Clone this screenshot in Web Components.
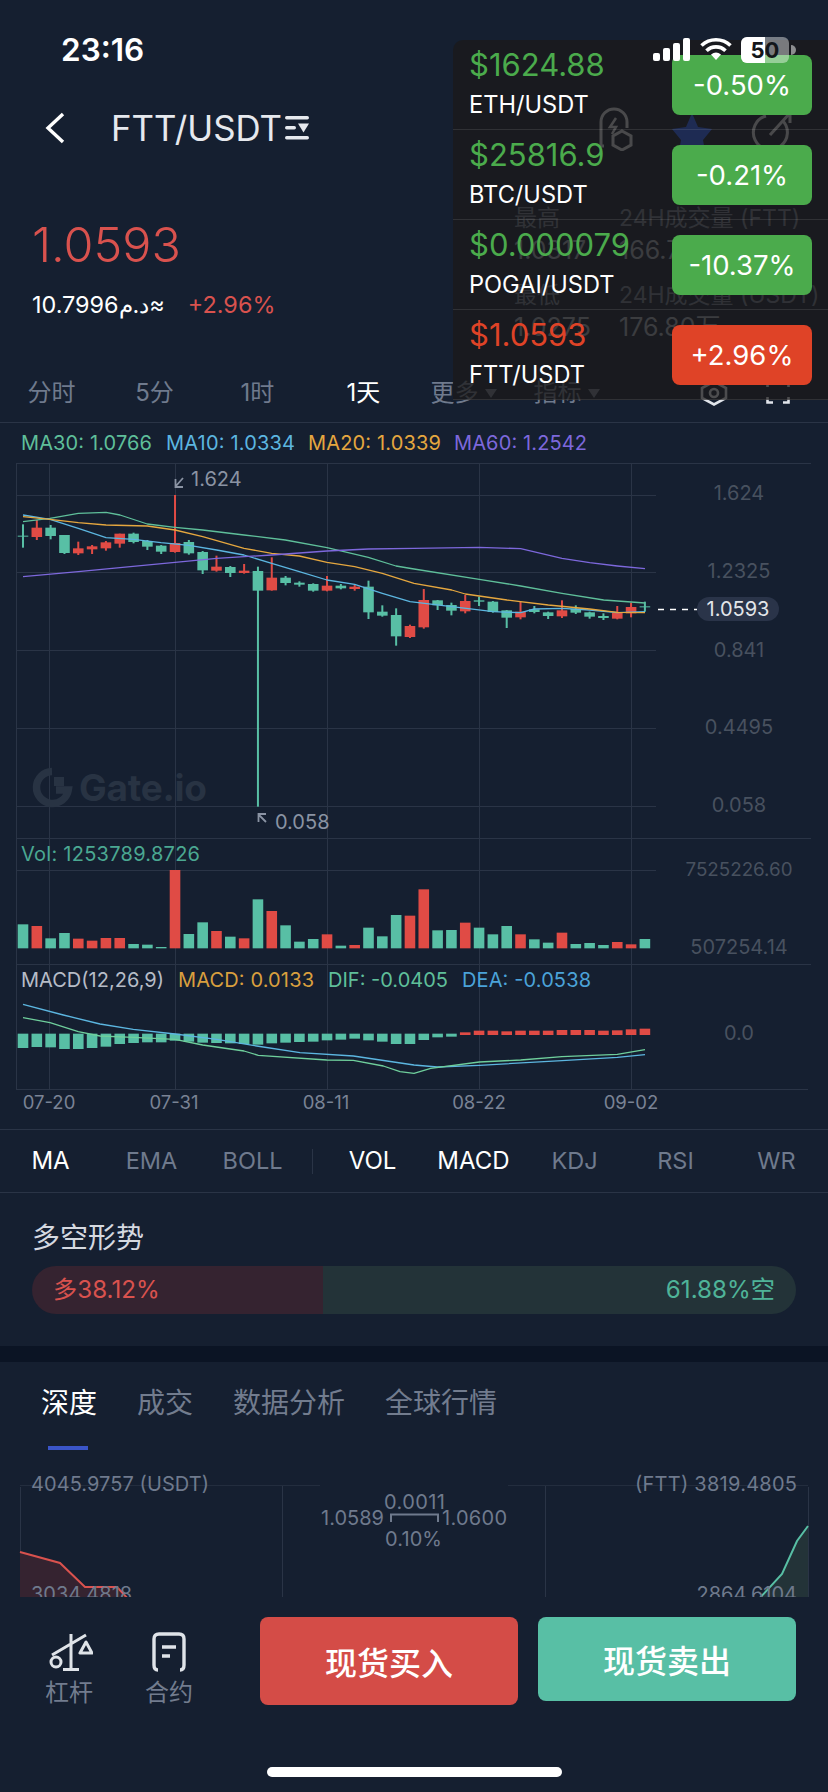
<!DOCTYPE html>
<html lang="zh">
<head>
<meta charset="UTF-8">
<title>FTT/USDT</title>
<style>
  html, body { margin: 0; padding: 0; background: #151f30; }
  body { position: relative; width: 828px; height: 1792px; overflow: hidden; font-family: Inter, "Noto Sans CJK SC", sans-serif; color: #fff; }
</style>
</head>
<body>
  <status-bar></status-bar>
  <pair-header>FTT/USDT</pair-header>
  <price-summary></price-summary>
  <period-tabs></period-tabs>
  <kline-chart></kline-chart>
  <indicator-tabs></indicator-tabs>
  <long-short></long-short>
  <detail-tabs></detail-tabs>
  <depth-chart></depth-chart>
  <bottom-bar></bottom-bar>
  <price-popup></price-popup>

<script>
  const FONT = 'Inter, "Noto Sans CJK SC", sans-serif';

  class StatusBar extends HTMLElement {
    connectedCallback() {
      this.attachShadow({ mode: 'open' }).innerHTML = `
        <style>
          :host { display: flex; position: relative; z-index: 3; height: 80px; box-sizing: border-box; padding: 33px 30px 0 61px; justify-content: space-between; }
          .time { font: 600 31.5px/34px ${FONT}; }
          svg { display: block; margin-top: 1px; }
          text { font: 700 22px ${FONT}; }
        </style>
        <div class="time">23:16</div>
        <svg width="148" height="32" viewBox="650 34 148 32">
          <g fill="#fff">
            <rect x="653" y="53" width="7" height="8" rx="2"/>
            <rect x="663" y="48" width="7" height="13" rx="2"/>
            <rect x="673" y="43" width="7" height="18" rx="2"/>
            <rect x="683" y="38" width="7" height="23" rx="2"/>
            <path d="M711 54.5 L716 60 L721 54.5 A8 8 0 0 0 711 54.5Z"/>
          </g>
          <g fill="none" stroke="#fff" stroke-width="3.6">
            <path d="M701.5 45.5 A21 21 0 0 1 730.5 45.5"/>
            <path d="M706.5 50.8 A13.5 13.5 0 0 1 725.5 50.8"/>
          </g>
          <rect x="741" y="37" width="48" height="26" rx="6" fill="#fff" fill-opacity=".42"/>
          <path d="M747 37 H765 V63 H747 A6 6 0 0 1 741 57 V43 A6 6 0 0 1 747 37Z" fill="#fff"/>
          <path d="M791 45 A5 5 0 0 1 791 55Z" fill="#fff" fill-opacity=".5"/>
          <text x="765" y="58" text-anchor="middle" fill="#14161a">50</text>
        </svg>`;
    }
  }
  customElements.define('status-bar', StatusBar);

  class PairHeader extends HTMLElement {
    connectedCallback() {
      this.attachShadow({ mode: 'open' }).innerHTML = `
        <style>
          :host { display: flex; align-items: center; height: 96px; box-sizing: border-box; padding-left: 45px; color: #e6e9ee; }
          .title { font: 400 34.8px/40px ${FONT}; margin-left: 46px; }
          .mark { margin-left: 3px; }
          .right { display: flex; align-items: center; margin-left: auto; }
          svg { display: block; }
        </style>
        <svg width="20" height="32" viewBox="0 0 20 32"><path d="M18 2 L3 16 L18 30" fill="none" stroke="#fff" stroke-width="3.4"/></svg>
        <div class="title"><slot></slot></div>
        <svg class="mark" width="24" height="24" viewBox="0 0 24 24" fill="#e6e9ee">
          <rect y="0" width="24" height="3.5" rx="1.7"/><rect y="20" width="24" height="3.5" rx="1.7"/>
          <rect y="10" width="11" height="3.5" rx="1.7"/><path d="M13 7.5 H24 L18.5 16.5Z"/>
        </svg>
        <div class="right">
          <svg width="231" height="46" viewBox="597 105 231 46" fill="none" stroke="#d4d8df" stroke-width="3">
            <path d="M604 146 H601 V122 A13 13 0 0 1 614 109 A13 13 0 0 1 627 122 V128"/>
            <path d="M616 118 L610 127 H616 L612 134" stroke-width="2.5"/>
            <path d="M622 131 L631 136 V145 L622 150 L613 145 V136Z"/>
            <path d="M692 113 L698 127 L712 129 L703 140 L705 151 H679 L681 140 L672 129 L686 127Z" fill="#2a60ff" stroke="none"/>
            <path d="M782 120 A17 17 0 1 1 766 116 M770 135 L790 113 M780 113 H790 V123"/>
          </svg>
        </div>`;
    }
  }
  customElements.define('pair-header', PairHeader);

  class PriceSummary extends HTMLElement {
    connectedCallback() {
      this.attachShadow({ mode: 'open' }).innerHTML = `
        <style>
          :host { display: flex; justify-content: space-between; height: 196px; box-sizing: border-box; padding-left: 32px; }
          .price { font: 300 48.5px/46px ${FONT}; color: #d9524e; margin-top: 46px; }
          .sub { display: flex; gap: 23px; font: 400 23.4px/30px ${FONT}; margin-top: 22px; }
          .sub span { color: #d9524e; }
          .stats { display: grid; grid-template-columns: 105px 209px; grid-template-rows: 32px 32px 13px 32px 32px; padding-top: 26px; font: 400 23px/32px ${FONT}; color: #6f7a8d; }
          .gap { grid-column: 1 / 3; }
          .v { color: #9aa2b0; font-size: 25px; }
        </style>
        <div>
          <div class="price">1.0593</div>
          <div class="sub">10.7996د.م≈<span>+2.96%</span></div>
        </div>
        <div class="stats">
          <div>最高</div><div>24H成交量 (FTT)</div>
          <div class="v">1.0317</div><div class="v">166.76万</div>
          <div class="gap"></div>
          <div>最低</div><div>24H成交量 (USDT)</div>
          <div class="v">1.0275</div><div class="v">176.80万</div>
        </div>`;
    }
  }
  customElements.define('price-summary', PriceSummary);

  class PeriodTabs extends HTMLElement {
    connectedCallback() {
      const tabs = ['分时', '5分', '1时', '1天', '更多', '指标'];
      this.attachShadow({ mode: 'open' }).innerHTML = `
        <style>
          :host { display: flex; align-items: center; height: 51px; box-sizing: border-box; border-bottom: 1px solid #2a3446; padding-bottom: 8px; font: 400 24px/30px ${FONT}; color: #6f7a8d; }
          .tab { width: 103px; box-sizing: border-box; text-align: center; }
          .on { color: #fff; padding-left: 6px; }
          i { display: inline-block; margin-left: 6px; vertical-align: 3px; border: 6px solid transparent; border-top: 9px solid #6f7a8d; border-bottom: 0; }
          .icons { display: flex; gap: 38px; margin-left: auto; padding-right: 38px; }
          svg { display: block; }
        </style>
        ${tabs.map((t, i) => `<div class="tab ${i === 3 ? 'on' : ''}">${t}${i > 3 ? '<i></i>' : ''}</div>`).join('')}
        <div class="icons">
          <svg width="28" height="26" viewBox="0 0 28 26" fill="none" stroke="#e0e4ea" stroke-width="2.6"><path d="M14 1.5 L26 8 V18 L14 24.5 L2 18 V8Z"/><circle cx="14" cy="13" r="4"/></svg>
          <svg width="24" height="24" viewBox="0 0 24 24" fill="none" stroke="#e0e4ea" stroke-width="2.6"><path d="M1.5 7 V1.5 H7 M17 1.5 H22.5 V7 M22.5 17 V22.5 H17 M7 22.5 H1.5 V17"/></svg>
        </div>`;
    }
  }
  customElements.define('period-tabs', PeriodTabs);

  // chart values are read off the picture in 3x crop coordinates
  const GREEN = '#58bfa5', RED = '#e04b45';
  const candles = [
    ['g',347,350,313,383],['r',323,351,300,360],['g',323,348,315,358],['g',345,399,345,402],['r',385,400,365,405],
    ['r',379,388,375,402],['r',367,385,363,392],['r',341,371,341,383],['g',341,366,338,370],['g',363,380,360,390],
    ['g',377,395,375,402],['r',369,396,225,398],['g',366,400,360,404],['g',396,451,393,462],['r',440,452,407,455],
    ['g',441,459,438,471],['r',452,459,432,461],['g',453,512,440,1160],['r',473,511,412,512],['g',473,489,468,496],
    ['g',488,494,484,500],['g',492,512,490,515],['r',497,512,468,514],['g',497,505,492,508],['r',500,507,495,512],
    ['g',500,577,482,597],['g',575,587,556,590],['g',585,649,565,677],['r',618,651,614,654],['r',540,622,507,626],
    ['g',541,556,540,570],['g',555,572,548,586],['r',543,574,525,580],['g',541,545,530,558],['g',545,576,543,578],
    ['g',571,593,570,624],['r',575,592,546,598],['g',568,576,558,580],['g',577,588,575,597],['r',571,589,541,594],
    ['g',566,578,556,582],['g',577,590,575,596],['g',588,594,580,600],['r',578,596,558,598],['r',561,580,548,592],
    ['g',559,562,545,575]
  ];
  const volumes = [
    ['g',313],['r',318],['g',355],['g',339],['r',356],['r',362],['r',354],['r',354],['g',372],['g',374],['g',381],['r',150],
    ['g',342],['g',307],['r',333],['g',350],['r',355],['g',238],['r',273],['g',316],['g',365],['g',357],['r',343],['g',377],
    ['r',375],['g',323],['g',349],['g',285],['r',287],['r',208],['g',331],['g',330],['r',308],['g',323],['g',343],['g',318],
    ['r',343],['g',358],['g',368],['r',338],['g',372],['g',369],['g',375],['r',366],['r',373],['g',357]
  ];
  const macd = [684,681,682,687,687,684,680,672,669,667,667,662,665,668,669,670,672,674,670,668,666,665,661,659,656,661,665,672,672,660,652,650,
    637,632,632,634,632,632,632,630,630,630,632,631,628,626];
  const lines = {
    ma30: ['#5fbf9a', 420, [69,305,150,295,235,280,318,277,360,285,442,312,525,322,608,330,732,345,856,360,981,383,1105,412,1188,438,1242,447,1438,478,1562,498,1686,520,1811,540,1935,549]],
    ma10: ['#5cb6e0', 420, [69,285,150,298,235,325,318,353,400,358,483,368,567,376,650,390,732,405,815,430,898,455,981,480,1064,493,1147,520,1230,545,1355,560,1480,575,1562,578,1603,567,1686,565,1769,570,1852,578,1935,575]],
    ma20: ['#e5a73f', 420, [69,290,150,298,235,308,318,315,442,318,525,330,608,350,732,385,815,400,898,408,981,427,1064,440,1147,460,1242,490,1355,510,1396,522,1521,540,1645,555,1769,567,1852,577,1935,578]],
    ma60: ['#7d68dc', 420, [69,470,235,455,360,443,525,427,650,415,815,405,981,393,1105,387,1242,385,1438,382,1562,386,1686,415,1769,428,1852,438,1935,446]],
    dea: ['#5cb6e0', 820, [69,553,190,585,300,612,400,628,525,642,650,658,770,678,900,698,1060,708,1242,735,1312,741,1438,736,1686,722,1852,712,1935,704]],
    dif: ['#6fcf9c', 820, [69,593,150,608,235,635,300,648,400,652,525,658,608,675,732,693,775,706,980,720,1060,721,1150,738,1200,755,1242,760,1292,745,1438,726,1562,720,1686,710,1852,703,1935,689]]
  };

  class KlineChart extends HTMLElement {
    connectedCallback() {
      this.attachShadow({ mode: 'open' }).innerHTML = `
        <style>
          :host { display: block; height: 706px; }
          svg { display: block; }
          text { font: 400 20px ${FONT}; dominant-baseline: central; }
          .axis { fill: #48515f; }
          .note { fill: #8a93a3; }
          .date { fill: #7a8395; font-size: 18.5px; }
        </style>
        <svg width="828" height="706" viewBox="0 423 828 706">${this.draw()}</svg>`;
    }

    draw() {
      let s = '';
      const grid = '#2a3446';
      [[463,811],[495,656],[572,656],[650,656],[728,656],[806,656],[838,811],[870,656],[964,811],[1089,808]].forEach(([y, x2]) => {
        s += `<path d="M16 ${y}.5 H${x2}" stroke="${grid}"/>`;
      });
      [16,49,175,327,479,631].forEach(x => { s += `<path d="M${x}.5 463 V1089" stroke="${grid}"/>`; });

      // watermark
      s += `<g fill="none" stroke="#283343" stroke-width="7.5"><path d="M52 771.5 A16 16 0 1 0 68.3 790 H56"/></g>
        <rect x="54" y="777" width="10" height="9" fill="#283343"/>
        <text x="79" y="787" style="font-size:37px;font-weight:700" textLength="128" fill="#283343">Gate.io</text>`;

      const cx = i => 23 + 13.82 * i;
      candles.forEach((c, i) => {
        const col = c[0] === 'g' ? GREEN : RED, x = cx(i);
        s += `<rect x="${x - 1}" y="${420 + c[3] / 3}" width="2" height="${(c[4] - c[3]) / 3}" fill="${col}"/>`;
        s += `<rect x="${x - 5.3}" y="${420 + c[1] / 3}" width="10.6" height="${(c[2] - c[1]) / 3}" fill="${col}"/>`;
      });
      volumes.forEach((v, i) => {
        s += `<rect x="${cx(i) - 5.3}" y="${820 + v[1] / 3}" width="10.6" height="${(385 - v[1]) / 3}" fill="${v[0] === 'g' ? GREEN : RED}"/>`;
      });
      macd.forEach((b, i) => {
        const up = b < 640, top = up ? b : 641;
        s += `<rect x="${cx(i) - 5.3}" y="${820 + top / 3}" width="10.6" height="${((up ? 645 : b) - top) / 3}" fill="${up ? RED : GREEN}"/>`;
      });
      Object.values(lines).forEach(([col, base, p]) => {
        let pts = '';
        for (let i = 0; i < p.length; i += 2) pts += `${(p[i] / 3).toFixed(1)},${(base + p[i + 1] / 3).toFixed(1)} `;
        s += `<polyline points="${pts}" fill="none" stroke="${col}" stroke-width="1.3" stroke-linejoin="round"/>`;
      });

      // high and low notes
      s += `<path d="M183 478 L175.5 486.5 M175.5 479 V487 H183" fill="none" stroke="#8a93a3" stroke-width="1.8"/>
        <text class="note" x="191" y="479">1.624</text>
        <path d="M266 822 L258.5 814.5 M258.5 822 V814 H266" fill="none" stroke="#8a93a3" stroke-width="1.8"/>
        <text class="note" x="275" y="822">0.058</text>`;

      // legends, widths measured from the crops
      const label = (x, w, y, col, t) => `<text x="${x}" y="${y}" textLength="${w}" fill="${col}">${t}</text>`;
      s += label(21, 131, 443, '#5fbf9a', 'MA30: 1.0766') + label(166, 129, 443, '#5cb6e0', 'MA10: 1.0334') +
        label(308, 133, 443, '#e5a73f', 'MA20: 1.0339') + label(454, 133, 443, '#7d68dc', 'MA60: 1.2542');
      s += label(21, 179, 854, '#4ba892', 'Vol: 1253789.8726');
      s += label(21, 143, 980, '#b6bcc7', 'MACD(12,26,9)') + label(178, 136, 980, '#d99f3e', 'MACD: 0.0133') +
        label(328, 120, 980, '#5fbf9a', 'DIF: -0.0405') + label(462, 129, 980, '#4ba3d9', 'DEA: -0.0538');

      // right axis
      [['1.624',493],['1.2325',571],['0.841',650],['0.4495',727],['0.058',805],['7525226.60',869,18.8],['507254.14',947],['0.0',1033]].forEach(([t, y, size]) => {
        s += `<text class="axis" x="739" y="${y}" text-anchor="middle"${size ? ` style="font-size:${size}px"` : ''}>${t}</text>`;
      });
      s += `<path d="M658 609.5 H697" stroke="#fff" stroke-width="1.6" stroke-dasharray="6 6"/>
        <rect x="697" y="597" width="82" height="24" rx="12" fill="#2a3449"/>
        <text x="738" y="609" text-anchor="middle" fill="#e3e6ea">1.0593</text>`;
      [['07-20',49],['07-31',174],['08-11',326],['08-22',479],['09-02',631]].forEach(([t, x]) => {
        s += `<text class="date" x="${x}" y="1102" text-anchor="middle">${t}</text>`;
      });
      return s;
    }
  }
  customElements.define('kline-chart', KlineChart);

  class IndicatorTabs extends HTMLElement {
    connectedCallback() {
      const item = (t, on) => `<div class="${on ? 'on' : ''}">${t}</div>`;
      this.attachShadow({ mode: 'open' }).innerHTML = `
        <style>
          :host { display: flex; align-items: center; height: 64px; box-sizing: border-box; border-top: 1px solid #2a3446; border-bottom: 1px solid #2a3446; font: 400 23.5px/30px ${FONT}; color: #6f7a8d; }
          div { width: 101px; text-align: center; }
          .on { color: #fff; font-size: 24px; }
          i { width: 1px; height: 25px; background: #2a3446; margin: 0 9px 0 9px; }
        </style>
        ${item('MA', 1)}${item('EMA')}${item('BOLL')}<i></i>${item('VOL', 1)}${item('MACD', 1)}${item('KDJ')}${item('RSI')}${item('WR')}`;
    }
  }
  customElements.define('indicator-tabs', IndicatorTabs);

  class LongShort extends HTMLElement {
    connectedCallback() {
      this.attachShadow({ mode: 'open' }).innerHTML = `
        <style>
          :host { display: block; height: 169px; box-sizing: border-box; padding: 30px 32px 0; border-bottom: 16px solid #0b1424; }
          h3 { margin: 0 0 13px; font: 400 28px/30px ${FONT}; color: #d5d9e0; }
          .bar { display: flex; height: 48px; border-radius: 24px; overflow: hidden; font: 400 24.2px/48px ${FONT}; }
          .l { width: 291px; background: #352330; color: #d9524e; padding-left: 21px; box-sizing: border-box; }
          .r { flex: 1; background: #233338; color: #4fb398; text-align: right; padding-right: 21px; }
        </style>
        <h3>多空形势</h3>
        <div class="bar"><div class="l">多38.12%</div><div class="r">61.88%空</div></div>`;
    }
  }
  customElements.define('long-short', LongShort);

  class DetailTabs extends HTMLElement {
    connectedCallback() {
      this.attachShadow({ mode: 'open' }).innerHTML = `
        <style>
          :host { display: flex; gap: 40px; height: 89px; box-sizing: border-box; padding: 25px 0 0 41px; font: 400 28px/32px ${FONT}; color: #727c8e; }
          div { position: relative; }
          .on { color: #fff; }
          .on::after { content: ""; position: absolute; left: 7px; top: 59px; width: 40px; height: 4px; background: #3a55c8; }
        </style>
        <div class="on">深度</div><div>成交</div><div>数据分析</div><div>全球行情</div>`;
    }
  }
  customElements.define('detail-tabs', DetailTabs);

  class DepthChart extends HTMLElement {
    connectedCallback() {
      this.attachShadow({ mode: 'open' }).innerHTML = `
        <style>
          :host { display: block; height: 146px; overflow: hidden; }
          svg { display: block; }
          text { font: 400 20px ${FONT}; fill: #6f7a8d; dominant-baseline: central; }
        </style>
        <svg width="828" height="146" viewBox="0 1450 828 146">
          <path d="M20.5 1486 V1596 M282.5 1484 V1596 M545.5 1484 V1596 M808.5 1486 V1596" stroke="#2a3446" fill="none"/>
          <path d="M20 1484.5 H320 M508 1484.5 H808" stroke="#232d3e" fill="none"/>
          <path d="M20 1551 L60 1562 L85 1586 L117 1586 L130 1600 H20Z" fill="#352330"/>
          <path d="M20 1551 L60 1562 L85 1586 L117 1586 L130 1600" stroke="#d9524e" stroke-width="2" fill="none"/>
          <path d="M757 1600 L782 1573 L797 1540 L808 1525 V1600Z" fill="#233338"/>
          <path d="M757 1600 L782 1573 L797 1540 L808 1525" stroke="#58bfa5" stroke-width="2" fill="none"/>
          <text x="31" y="1483" textLength="178">4045.9757 (USDT)</text>
          <text x="635" y="1483" textLength="162">(FTT) 3819.4805</text>
          <text x="384" y="1501" textLength="61">0.0011</text>
          <text x="321" y="1517" textLength="63">1.0589</text>
          <path d="M391 1521 V1513.5 H438 V1521" stroke="#6f7a8d" stroke-width="2" fill="none"/>
          <text x="442" y="1517" textLength="65">1.0600</text>
          <text x="385" y="1538" textLength="57">0.10%</text>
          <text x="31" y="1593">3034.4818</text>
          <text x="797" y="1593" text-anchor="end">2864.6104</text>
        </svg>`;
    }
  }
  customElements.define('depth-chart', DepthChart);

  class BottomBar extends HTMLElement {
    connectedCallback() {
      this.attachShadow({ mode: 'open' }).innerHTML = `
        <style>
          :host { display: block; position: relative; height: 196px; background: #151f30; }
          .row { display: flex; align-items: flex-start; padding: 20px 32px 0 19px; }
          .tool { width: 100px; display: flex; flex-direction: column; align-items: center; padding-top: 15px; font: 400 24px/30px ${FONT}; color: #727c8e; }
          .tool svg { display: block; margin-bottom: 6px; }
          .scale { margin-left: 4px; }
          button { display: block; width: 258px; border: 0; border-radius: 8px; padding: 0; color: #fff; font: 500 32px ${FONT}; }
          .buy { height: 88px; margin-left: 41px; background: #d44c47; }
          .sell { height: 84px; margin-left: 20px; background: #58bfa5; }
          .home { position: absolute; left: 267px; top: 170px; width: 295px; height: 10px; border-radius: 5px; background: #fff; }
        </style>
        <div class="row">
          <div class="tool">
            <svg class="scale" width="44" height="40" viewBox="0 0 44 40" fill="none" stroke="#dfe3e8" stroke-width="3">
              <path d="M3 23 L37 3 M22 2 V37 M14 37.5 H30"/>
              <circle cx="7" cy="30" r="5"/>
              <path d="M37 10 L31 21 H43Z" stroke-linejoin="round"/>
            </svg>
            杠杆
          </div>
          <div class="tool">
            <svg width="34" height="40" viewBox="0 0 34 40" fill="none" stroke="#dfe3e8" stroke-width="3.4">
              <path d="M6 38 Q2 38 2 33 V7 Q2 2 7 2 H27 Q32 2 32 7 V33 Q32 38 28 38"/>
              <path d="M10 15 H24 M10 24 H18"/>
            </svg>
            合约
          </div>
          <button class="buy">现货买入</button>
          <button class="sell">现货卖出</button>
        </div>
        <div class="home"></div>`;
    }
  }
  customElements.define('bottom-bar', BottomBar);

  class PricePopup extends HTMLElement {
    connectedCallback() {
      const rows = [
        ['$1624.88', 'ETH/USDT', '-0.50%', 0],
        ['$25816.9', 'BTC/USDT', '-0.21%', 0],
        ['$0.000079', 'POGAI/USDT', '-10.37%', 0],
        ['$1.0593', 'FTT/USDT', '+2.96%', 1]
      ];
      this.attachShadow({ mode: 'open' }).innerHTML = `
        <style>
          :host { display: block; position: absolute; z-index: 2; left: 453px; top: 40px; width: 375px; background: rgba(27,26,25,.75); border-radius: 10px 0 0 0; }
          .row { display: flex; align-items: center; justify-content: space-between; height: 90px; box-sizing: border-box; padding: 0 16px; border-bottom: 1px solid rgba(255,255,255,.1); }
          .p { font: 400 31px/40px ${FONT}; color: #4bab4c; }
          .n { font: 400 23.6px/40px ${FONT}; color: #fff; }
          .b { width: 140px; height: 60px; border-radius: 8px; background: #4bab4c; font: 400 27.5px/60px ${FONT}; text-align: center; color: #fff; }
          .up .p { color: #df4327; }
          .up .b { background: #df4327; }
        </style>
        ${rows.map(r => `<div class="row ${r[3] ? 'up' : ''}">
          <div><div class="p">${r[0]}</div><div class="n">${r[1]}</div></div>
          <div class="b">${r[2]}</div>
        </div>`).join('')}`;
    }
  }
  customElements.define('price-popup', PricePopup);
</script>
</body>
</html>
